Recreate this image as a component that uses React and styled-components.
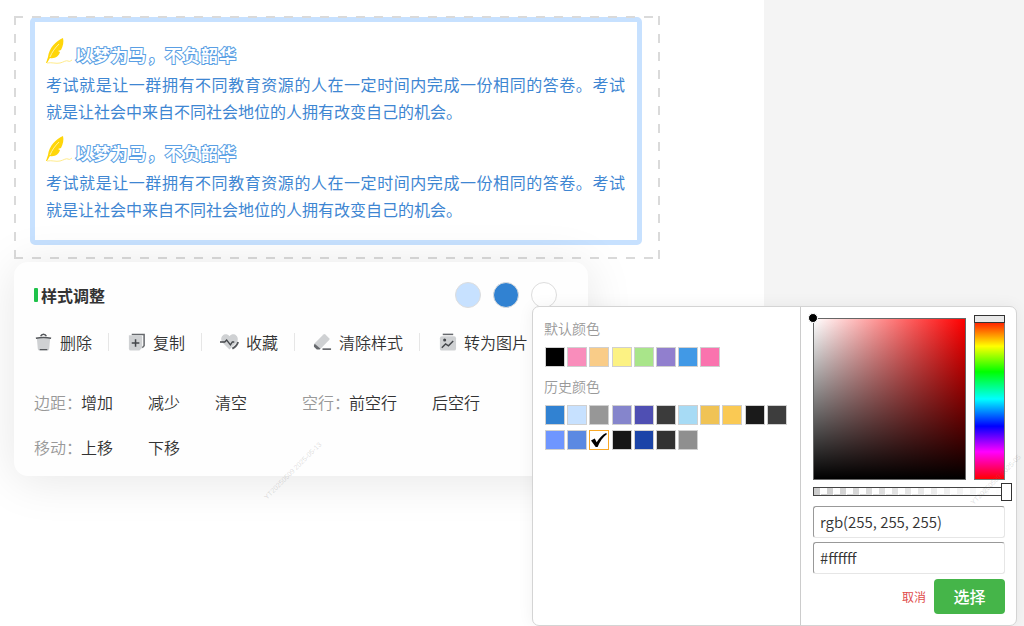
import { useState } from "react";
import styled, { createGlobalStyle } from "styled-components";

const GlobalStyle = createGlobalStyle`
  * {
    box-sizing: border-box;
  }

  body {
    margin: 0;
    background: #f4f4f4;
    color: #333333;
    font-family: "Noto Sans CJK SC", sans-serif;
    font-size: 16px;
    font-weight: 350;
    overflow: hidden;
  }

  h2, h3, h4, p {
    margin: 0;
  }

  button {
    padding: 0;
    border: none;
    background: none;
    color: inherit;
    font-family: inherit;
    font-size: inherit;
    font-weight: inherit;
    cursor: pointer;
  }
`;

const Page = styled.div`
  display: grid;
  grid-template-columns: 1fr 260px;
  min-height: 100vh;
  position: relative;
`;

const Canvas = styled.main`
  padding: 16px 104px 0 14px;
  background: #ffffff;
  position: relative;
`;

const Selection = styled.section`
  position: relative;
  padding: 1px 18px 14px 16px;

  &::after {
    content: "";
    position: absolute;
    inset: 0;
    pointer-events: none;
    --h: repeating-linear-gradient(90deg, #dadada 0 9px, transparent 9px 18px);
    --v: repeating-linear-gradient(180deg, #dadada 0 9px, transparent 9px 18px);
    background: var(--h) top / 100% 2px no-repeat, var(--h) bottom / 100% 2px no-repeat,
      var(--v) left / 2px 100% no-repeat, var(--v) right / 2px 100% no-repeat;
  }
`;

const Article = styled.div`
  display: grid;
  gap: 12px;
  padding: 17px 12px 17px 11px;
  border: 5px solid #c7e1ff;
  border-radius: 5px;
  color: #3e86d2;
`;

const ArticleTitle = styled.h3`
  display: flex;
  align-items: flex-end;
  gap: 2px;
  height: 32px;
  padding-bottom: 6px;
  color: #ffffff;
  font-size: 17px;
  font-weight: 700;
  line-height: 20px;
  letter-spacing: 1px;
  -webkit-text-stroke: 2px #5a9fe4;
  paint-order: stroke fill;
`;

const Paragraph = styled.p`
  font-weight: 400;
  line-height: 27px;
  text-align: justify;
`;

const NoBreak = styled.span`
  white-space: nowrap;
`;

const Panel = styled.section`
  position: relative;
  margin: 3px 72px 0 0;
  padding: 17px 20px 7px;
  border-radius: 14px;
  background: #fefefe;
  box-shadow: 0 4px 48px rgba(0, 0, 0, 0.1);
  white-space: nowrap;
`;

const PanelHead = styled.div`
  display: flex;
  align-items: center;
  height: 32px;
`;

const PanelTitle = styled.h2`
  flex: 1;
  display: flex;
  align-items: center;
  gap: 3px;
  font-size: 16px;
  font-weight: 700;

  &::before {
    content: "";
    width: 4px;
    height: 14px;
    border-radius: 1px;
    background: #1fc24a;
  }
`;

const Dots = styled.div`
  display: flex;
  gap: 12px;
  padding-right: 11px;
`;

const Dot = styled.button`
  width: 26px;
  height: 26px;
  border: 1px solid #dddddd;
  border-radius: 50%;
  background: ${(props) => props.$color};
`;

const Tools = styled.div`
  display: flex;
  align-items: center;
  height: 32px;
  margin: 15px 0 21px;
`;

const Tool = styled.button`
  display: flex;
  align-items: center;
  gap: 7px;

  & + & {
    margin-left: 16px;
    padding-left: 18px;
    border-left: 1px solid #e6e6e6;
    line-height: 18px;
  }

  svg {
    width: 19px;
    height: 18px;
  }
`;

const OptionRow = styled.div`
  display: flex;
  align-items: center;
  height: 45px;
`;

const OptionGroup = styled.div`
  display: flex;
  align-items: center;
  gap: 35px;
  margin-right: 55px;
`;

const OptionLabel = styled.span`
  margin-right: -36px;
  color: #999999;
`;

const Watermark = styled.span`
  position: absolute;
  left: ${(props) => props.$left};
  top: ${(props) => props.$top};
  color: rgba(120, 120, 120, 0.25);
  font-family: "Liberation Sans", sans-serif;
  font-size: 7px;
  line-height: 8px;
  white-space: nowrap;
  transform: translate(-50%, -50%) rotate(-45deg);
  pointer-events: none;
`;

const Picker = styled.aside`
  position: absolute;
  top: 306px;
  right: 7px;
  display: grid;
  grid-template-columns: 268px 1fr;
  width: 485px;
  border: 1px solid #d4d4d4;
  border-radius: 7px;
  background: #ffffff;
  box-shadow: 0 0 16px rgba(0, 0, 0, 0.06);
`;

const Palettes = styled.div`
  padding: 10px 11px;
  border-right: 1px solid #cccccc;
`;

const PaletteTitle = styled.h4`
  height: 22px;
  color: #999999;
  font-size: 14px;
  font-weight: 350;
  line-height: 22px;
`;

const Palette = styled.div`
  display: grid;
  grid-template-columns: repeat(11, 1fr);
  row-gap: 5px;
  padding: 8px 0 8px 1px;
`;

const Swatch = styled.button`
  display: flex;
  align-items: center;
  justify-content: center;
  width: 20px;
  height: 20px;
  border: 1px solid ${(props) => (props.$active ? "#f9a825" : "#d0d0d0")};
  background: ${(props) => props.$color};
`;

const Chooser = styled.div`
  padding: 11px 11px 11px 12px;
`;

const Gradients = styled.div`
  display: grid;
  grid-template-columns: 1fr 31px;
  gap: 8px;
  height: 162px;
`;

const Shade = styled.div`
  position: relative;
  border: 1px solid #666666;
  background: linear-gradient(to top, #000000, transparent), linear-gradient(to right, #ffffff, #ff0000);

  &::before {
    content: "";
    position: absolute;
    left: -6px;
    top: -6px;
    width: 8px;
    height: 8px;
    border: 1px solid #ffffff;
    border-radius: 50%;
    background: #000000;
  }
`;

const Hue = styled.div`
  position: relative;
  border: 1px solid #777777;
  background: linear-gradient(#ff0000, #ffff00 17%, #00ff00 33%, #00ffff 50%, #0000ff 67%, #ff00ff 83%, #ff0000);

  &::before {
    content: "";
    position: absolute;
    inset: -4px -1px auto;
    height: 6px;
    border: 1px solid #333333;
    background: #e8e8e8;
  }
`;

const Alpha = styled.div`
  position: relative;
  height: 9px;
  margin: 7px 0 10px;
  border: 1px solid #444444;
  background: linear-gradient(to right, rgba(255, 255, 255, 0), #ffffff),
    repeating-conic-gradient(#ffffff 0 25%, #cccccc 0 50%) 0 0 / 13px 13px;

  &::before {
    content: "";
    position: absolute;
    right: -8px;
    top: -5px;
    width: 9px;
    height: 16px;
    border: 1px solid #333333;
    background: #ffffff;
  }
`;

const ColorInput = styled.input`
  display: block;
  width: 100%;
  height: 32px;
  margin-bottom: 4px;
  padding: 0 6px 2px;
  border: 1px solid #e6e6e6;
  border-top-color: #999999;
  border-left-color: #999999;
  border-radius: 3px;
  background: #ffffff;
  color: #333333;
  font-family: "Noto Sans CJK SC", sans-serif;
  font-size: 15px;
  font-weight: 350;
`;

const Actions = styled.div`
  display: flex;
  justify-content: flex-end;
  align-items: center;
  gap: 8px;
  margin-top: 5px;
`;

const Cancel = styled.button`
  color: #e04b4b;
  font-size: 12px;
  font-weight: 400;
`;

const Confirm = styled.button`
  width: 71px;
  height: 35px;
  padding-bottom: 2px;
  border-radius: 4px;
  background: #45b549;
  color: #ffffff;
  font-weight: 500;
`;

const Feather = () => (
  <svg width="27" height="27" viewBox="0 0 27 27">
    <path d="M17 0C10 3 3 10 2 19L0 25h1l3-5c5 1 9-2 10-6l-2-1 3-1c2-4 3-8 2-12z" fill="#ffd60a" />
    <path d="M4 19C6 14 9 10 13 6" fill="none" stroke="#fff3a0" strokeWidth="1" />
    <path d="M1 25c5-1 9 1 13 0s6-3 8-2 2 0 4-1" fill="none" stroke="#ffec8c" strokeWidth="1" />
  </svg>
);

const TrashIcon = () => (
  <svg viewBox="0 0 20 18">
    <path d="M3 5h14l-1 11c0 1-1 2-2 2H6c-1 0-2-1-2-2z" fill="#cfd1d3" />
    <path d="M2 5c5-1 11-1 16 0M7 3c1-3 5-3 6 0M6 17h8" fill="none" stroke="#55585c" strokeWidth="1.5" />
  </svg>
);

const CopyIcon = () => (
  <svg viewBox="0 0 20 18">
    <path d="M5 1h13v12l-2 2" fill="none" stroke="#66696d" strokeWidth="1.6" />
    <path d="M2 2h12q2 0 2 2v11l-3 3H4q-2 0-2-2z" fill="#cfd1d3" />
    <path d="M5 10h8M9 6v8" stroke="#44474b" strokeWidth="1.6" />
  </svg>
);

const HeartIcon = () => (
  <svg viewBox="0 0 20 18">
    <path d="M10 17L2 9C-1 3 6-2 10 3c4-5 11 0 8 6z" fill="#cfd1d3" />
    <path d="M0 9h5l2-2 4 5 2-3h2" fill="none" stroke="#44474b" strokeWidth="1.4" />
    <path d="M19 9q-1 4-6 7" fill="none" stroke="#55585c" strokeWidth="2" />
  </svg>
);

const EraserIcon = () => (
  <svg viewBox="0 0 20 18">
    <path d="M11 1q1-1 2 0l4 4q1 1 0 2l-9 9-7-5z" fill="#cfd1d3" />
    <path d="M2 11l6 5-1 1H4l-3-3v-2z" fill="#66696d" />
    <path d="M10 16.5h9" stroke="#55585c" strokeWidth="1.6" />
  </svg>
);

const PictureIcon = () => (
  <svg viewBox="0 0 20 18">
    <path d="M5 1h11" stroke="#66696d" strokeWidth="1.6" />
    <rect x="2" y="3" width="17" height="15" rx="2" fill="#cfd1d3" />
    <circle cx="7" cy="7" r="1.6" fill="#44474b" />
    <path d="M4 15l4-4 3 2 5-5" fill="none" stroke="#44474b" strokeWidth="1.5" />
  </svg>
);

const CheckIcon = () => (
  <svg width="16" height="16" viewBox="0 0 17 17">
    <path d="M0 9l4-2 2 4C9 6 12 3 16 1l1 1C13 5 9 10 7 16H5z" fill="#000000" />
  </svg>
);

const tools = [
  { name: "删除", Icon: TrashIcon },
  { name: "复制", Icon: CopyIcon },
  { name: "收藏", Icon: HeartIcon },
  { name: "清除样式", Icon: EraserIcon },
  { name: "转为图片", Icon: PictureIcon },
];

const defaults = ["#000000", "#f98dbb", "#f9cc88", "#fcf283", "#a9e58a", "#917fce", "#4199e6", "#fa73ae"];

const history = [
  "#3182d2", "#c7e1ff", "#979797", "#8585cc", "#4f4fb3", "#3b3b3b", "#a7dbf5", "#f0c355", "#fac953", "#1a1a1a", "#3d3d3d",
  "#6f96ff", "#5b89e2", "#ffffff", "#161616", "#1b44a8", "#323232", "#8f8f8f",
];

const Passage = () => (
  <div>
    <ArticleTitle>
      <Feather />
      以梦为马，不负韶华
    </ArticleTitle>
    <Paragraph>
      考试就是让一群拥有不同教育资源的人在一定时间内完成一份相同的答卷。考试<NoBreak>就是让</NoBreak>社会中来自不同社会地位的人拥有改变自己的机会。
    </Paragraph>
  </div>
);

const Options = ({ label, items }) => (
  <OptionGroup>
    <OptionLabel>{label}</OptionLabel>
    {items.map((item) => (
      <button key={item}>{item}</button>
    ))}
  </OptionGroup>
);

const App = () => {
  const [rgb, setRgb] = useState("rgb(255, 255, 255)");
  const [hex, setHex] = useState("#ffffff");

  return (
    <Page>
      <GlobalStyle />
      <Canvas>
        <Selection>
          <Article>
            <Passage />
            <Passage />
          </Article>
        </Selection>
        <Panel>
          <PanelHead>
            <PanelTitle>样式调整</PanelTitle>
            <Dots>
              <Dot $color="#c7e1ff" aria-label="浅蓝" />
              <Dot $color="#3182d2" aria-label="蓝" />
              <Dot $color="#ffffff" aria-label="白" />
            </Dots>
          </PanelHead>
          <Tools>
            {tools.map(({ name, Icon }) => (
              <Tool key={name}>
                <Icon />
                {name}
              </Tool>
            ))}
          </Tools>
          <OptionRow>
            <Options label="边距：" items={["增加", "减少", "清空"]} />
            <Options label="空行：" items={["前空行", "后空行"]} />
          </OptionRow>
          <OptionRow>
            <Options label="移动：" items={["上移", "下移"]} />
          </OptionRow>
        </Panel>
        <Watermark $left="293px" $top="471px">YT20250509 2025-05-13</Watermark>
      </Canvas>
      <Picker>
        <Palettes>
          <PaletteTitle>默认颜色</PaletteTitle>
          <Palette>
            {defaults.map((color) => (
              <Swatch key={color} $color={color} aria-label={color} />
            ))}
          </Palette>
          <PaletteTitle>历史颜色</PaletteTitle>
          <Palette>
            {history.map((color) => (
              <Swatch key={color} $color={color} $active={color === hex} aria-label={color}>
                {color === hex && <CheckIcon />}
              </Swatch>
            ))}
          </Palette>
        </Palettes>
        <Chooser>
          <Gradients>
            <Shade />
            <Hue />
          </Gradients>
          <Alpha />
          <ColorInput aria-label="RGB" value={rgb} onChange={(e) => setRgb(e.target.value)} />
          <ColorInput aria-label="HEX" value={hex} onChange={(e) => setHex(e.target.value)} />
          <Actions>
            <Cancel>取消</Cancel>
            <Confirm>选择</Confirm>
          </Actions>
        </Chooser>
        <Watermark $left="463px" $top="173px">YT20250509 2025-05</Watermark>
      </Picker>
    </Page>
  );
};

export default App;
